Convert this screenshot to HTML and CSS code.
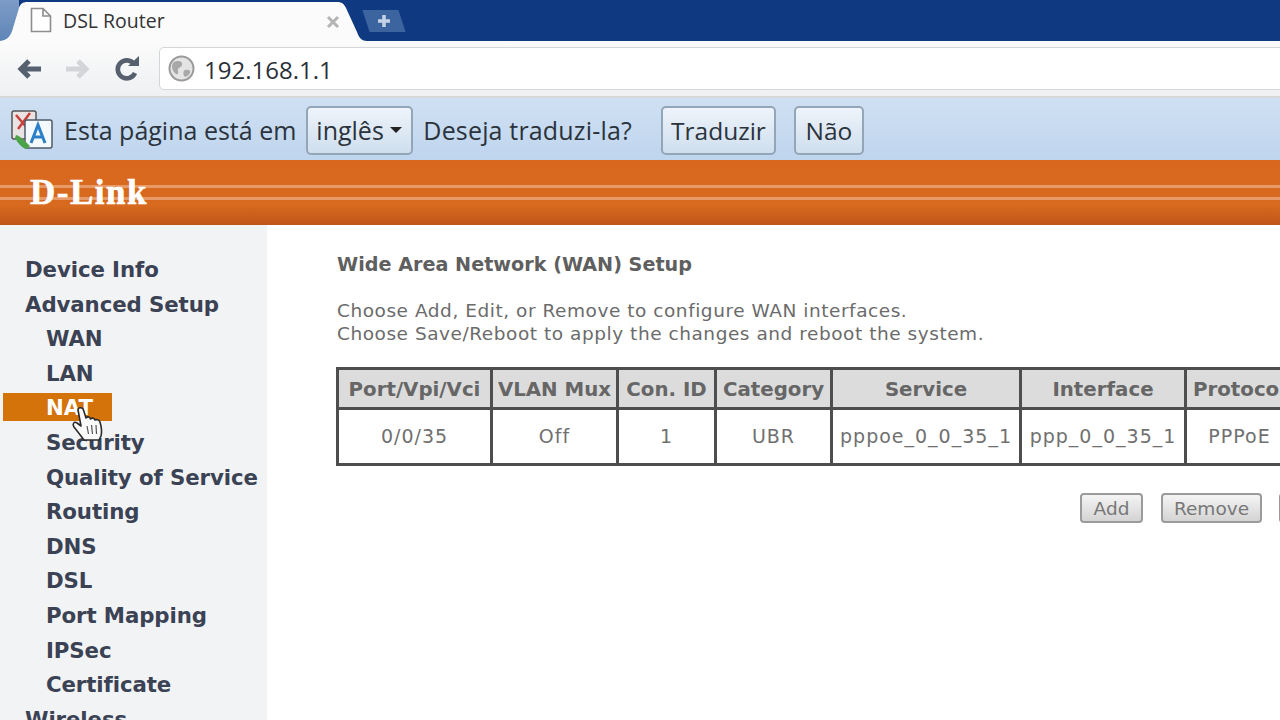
FILE: index.html
```html
<!DOCTYPE html>
<html lang="pt">
<head>
<meta charset="utf-8">
<title>DSL Router</title>
<link rel="stylesheet" href="styles.css">
</head>
<body>
<div class="tabstrip">
  <div class="tab">
    <svg class="tab-shape" width="372" height="41" viewBox="0 0 372 41"><path d="M0 41 C8 41 12 36 14 28 L20 8 C21 4 24 2 28 2 L338 2 C343 2 345 4 347 8 L358 32 C360 38 363 41 368 41 Z" fill="#fbfbfb"/></svg>
    <svg class="tab-icon" width="24" height="28" viewBox="0 0 24 28"><path d="M2.5 2.5 H14 L21.5 10 V25.5 H2.5 Z M14 2.5 V10 H21.5" fill="#fff" stroke="#8d8d8d" stroke-width="1.6"/></svg>
    <span class="tab-title">DSL Router</span>
    <svg class="tab-close" width="14" height="14" viewBox="0 0 14 14"><path d="M2 2 L12 12 M12 2 L2 12" stroke="#b4b4b4" stroke-width="3"/></svg>
  </div>
  <div class="newtab">
    <svg width="16" height="16" viewBox="0 0 16 16"><path d="M8 2 V14 M2 8 H14" stroke="#c4d3e6" stroke-width="3.5"/></svg>
  </div>
</div>
<div class="toolbar">
  <svg class="nav" width="28" height="24" viewBox="0 0 28 24"><path d="M26 12 H7 M14 4 L6 12 L14 20" fill="none" stroke="#56606e" stroke-width="5"/></svg>
  <svg class="nav" width="28" height="24" viewBox="0 0 28 24"><path d="M2 12 H21 M14 4 L22 12 L14 20" fill="none" stroke="#d3d5d8" stroke-width="5"/></svg>
  <svg class="nav" width="28" height="26" viewBox="0 0 28 26"><path d="M21 8 A9 9 0 1 0 22 17" fill="none" stroke="#56606e" stroke-width="4.6"/><path d="M15 10 H26 V0 Z" fill="#56606e"/></svg>
  <div class="omnibox">
    <svg class="globe" width="27" height="27" viewBox="0 0 27 27"><circle cx="13.5" cy="13.5" r="12" fill="#e4e4e4" stroke="#9a9a9a" stroke-width="2"/><path d="M6 7 C10 5 15 6 14 10 C13 13 9 12 10 16 C11 20 8 20 6 17 C3 13 4 9 6 7 Z M17 15 C20 14 23 15 22 18 C20 21 17 23 16 21 C15 19 15 16 17 15 Z" fill="#a8a8a8"/></svg>
    <span class="url">192.168.1.1</span>
  </div>
</div>
<div class="infobar">
  <svg class="translate" width="44" height="42" viewBox="0 0 44 42">
    <rect x="2" y="2" width="24" height="28" rx="2" fill="#e9e3e3" stroke="#555" stroke-width="1.5"/>
    <path d="M6 6 L18 20 M20 4 L8 20" stroke="#c9403a" stroke-width="2.5"/>
    <rect x="15" y="11" width="27" height="28" rx="2" fill="#f4f9fd" stroke="#4d5b69" stroke-width="1.5"/>
    <path d="M21 34 L28 16 L35 34 M24 28 H32" fill="none" stroke="#2b7fc9" stroke-width="3"/>
    <path d="M6 26 C10 27 16 33 20 37 L16 40 C12 39 7 33 5 29 Z" fill="#4ca246"/>
  </svg>
  <span class="info-text">Esta página está em</span>
  <div class="btn lang">inglês<span class="caret"></span></div>
  <span class="info-text ask">Deseja traduzi-la?</span>
  <div class="btn translate-btn">Traduzir</div>
  <div class="btn no-btn">Não</div>
</div>
<header class="brand">
  <span class="logo">D-Link</span>
</header>
<div class="page">
  <nav class="sidebar">
    <a class="item">Device Info</a>
    <a class="item">Advanced Setup</a>
    <a class="item sub">WAN</a>
    <a class="item sub">LAN</a>
    <a class="item sub active">NAT</a>
    <a class="item sub">Security</a>
    <a class="item sub">Quality of Service</a>
    <a class="item sub">Routing</a>
    <a class="item sub">DNS</a>
    <a class="item sub">DSL</a>
    <a class="item sub">Port Mapping</a>
    <a class="item sub">IPSec</a>
    <a class="item sub">Certificate</a>
    <a class="item">Wireless</a>
    <svg class="cursor" width="36" height="38" viewBox="0 0 36 38"><path d="M8 5 C8 2 13 2 13.5 5 L16 13 C18 11 20 12 20.5 14 C22 12.5 24.5 13 25 15 C27 14 29.5 15 30 17 C31.5 22 32 27 31 31 L29 35 H14 C11 31 8 27 4 22 C2 19 4 16 7 18 L11 21 Z" fill="#fafafa" stroke="#2a2a2a" stroke-width="1.6" stroke-linejoin="round"/><path d="M17 21 L18.5 29 M21.5 20 L22.5 29 M26 20 L26.5 29" stroke="#555" stroke-width="1.2"/></svg>
  </nav>
  <main class="content">
    <h1 class="title">Wide Area Network (WAN) Setup</h1>
    <p class="desc">Choose Add, Edit, or Remove to configure WAN interfaces.<br>Choose Save/Reboot to apply the changes and reboot the system.</p>
    <table class="wan">
      <colgroup>
        <col class="c1"><col class="c2"><col class="c3"><col class="c4"><col class="c5"><col class="c6"><col class="c7">
      </colgroup>
      <thead>
        <tr><th>Port/Vpi/Vci</th><th>VLAN Mux</th><th>Con. ID</th><th>Category</th><th>Service</th><th>Interface</th><th>Protocol</th></tr>
      </thead>
      <tbody>
        <tr><td>0/0/35</td><td>Off</td><td>1</td><td>UBR</td><td>pppoe_0_0_35_1</td><td>ppp_0_0_35_1</td><td>PPPoE</td></tr>
      </tbody>
    </table>
    <div class="actions">
      <div class="action add">Add</div>
      <div class="action remove">Remove</div>
      <div class="action more"></div>
    </div>
  </main>
</div>
</body>
</html>
```
FILE: styles.css
```css
* { box-sizing: border-box; }
html, body { margin: 0; padding: 0; width: 1280px; height: 720px; overflow: hidden; background: #fff; }
body { display: flex; flex-direction: column; font-family: "Open Sans", "Liberation Sans", sans-serif; }

.tabstrip { height: 41px; flex: none; display: flex; align-items: flex-start; background: #0f3a82; }
.tab { position: relative; width: 358px; height: 41px; flex: none; margin-left: -1px; background: linear-gradient(#7d9cc6, #5f86b8) 0 0 / 20px 41px no-repeat; }
.tab-shape { position: absolute; left: 0; top: 0; }
.tab-icon { position: absolute; left: 30px; top: 6px; }
.tab-title { position: absolute; left: 64px; top: 8px; font-size: 19.5px; line-height: 25px; color: #333; }
.tab-close { position: absolute; left: 327px; top: 15px; }
.newtab { width: 36px; height: 22px; margin: 10px 0 0 9px; background: #3c659f; display: flex; align-items: center; justify-content: center; transform: skewX(18deg); }
.newtab svg { transform: skewX(-18deg); }

.toolbar { height: 57px; flex: none; display: flex; align-items: center; padding: 0 0 0 15px; background: linear-gradient(#fbfbfb, #eef0f2); border-bottom: 2px solid #d6d8da; }
.nav { flex: none; margin-right: 21px; }
.nav:nth-child(3) { margin-right: 18px; }
.omnibox { flex: 1; height: 43px; margin-right: -8px; display: flex; align-items: center; background: #fff; border: 1px solid #d4d6d9; border-radius: 5px; padding-left: 8px; }
.url { margin-left: 9px; padding-top: 3px; font-size: 24px; line-height: 30px; color: #2b3038; }

.infobar { height: 62px; flex: none; display: flex; align-items: center; padding: 2px 0 0 10px; background: linear-gradient(#cfe0f2, #bfd5ee); }
.translate { flex: none; margin-right: 10px; }
.info-text { font-size: 25px; color: #2b333c; white-space: nowrap; }
.ask { margin-left: 10px; letter-spacing: 0.17px; }
.btn { height: 49px; display: flex; align-items: center; font-size: 25px; color: #2b333c; background: linear-gradient(#eef4fa, #cfdeee); border: 2px solid #93a6b8; border-radius: 5px; white-space: nowrap; }
.lang { margin-left: 10px; padding: 0 8px; width: 107px; }
.caret { width: 0; height: 0; margin-left: 6px; border: 6px solid transparent; border-top-color: #222; border-bottom-width: 0; }
.translate-btn { margin-left: 29px; width: 115px; justify-content: center; font-size: 24.5px; }
.no-btn { margin-left: 18px; width: 70px; justify-content: center; font-size: 24.5px; }

.brand { height: 65px; flex: none; position: relative; display: flex; align-items: center; padding-left: 30px; background:
  linear-gradient(#e79a68, #e79a68) 0 25px / 100% 3px no-repeat,
  linear-gradient(#e79a68, #e79a68) 0 37px / 100% 3px no-repeat,
  linear-gradient(#d9681e 0%, #d76a1f 70%, #bf5519 100%); }
.logo { font-family: "Liberation Serif", serif; font-weight: 700; font-size: 35px; line-height: 36px; color: #fff; letter-spacing: 1.5px; -webkit-text-stroke: 0.6px #fff; }

.page { flex: 1; display: flex; min-height: 0; }
.sidebar { position: relative; width: 267px; flex: none; background: #f2f3f5; padding-top: 27px; display: flex; flex-direction: column; overflow: hidden; }
.item { display: block; height: 34.6px; line-height: 36.6px; padding-left: 25px; font-family: "DejaVu Sans", sans-serif; font-weight: 700; font-size: 21.3px; letter-spacing: -0.1px; color: #3a4254; white-space: nowrap; flex: none; }
.sub { padding-left: 46px; }
.active { width: 109px; height: 28px; line-height: 30px; margin: 3px 0 3.6px 3px; padding-left: 43px; background: #d4730a; color: #fff; }
.cursor { position: absolute; left: 70px; top: 180px; }

.content { flex: 1; min-width: 0; padding: 28px 0 0 70px; overflow: hidden; }
.title { margin: 0; font-family: "DejaVu Sans", sans-serif; font-weight: 700; font-size: 19.2px; line-height: 24px; color: #5f5f5f; white-space: nowrap; }
.desc { margin: 22px 0 0; font-family: "DejaVu Sans", sans-serif; font-size: 18.5px; letter-spacing: 0.54px; line-height: 23px; color: #6b6b6b; white-space: nowrap; }
.wan { margin: 22px 0 0 -1px; border-collapse: collapse; table-layout: fixed; width: 956px; border: 3px solid #4e4e4e; font-family: "DejaVu Sans", sans-serif; }
.wan th, .wan td { border: 3px solid #4e4e4e; text-align: center; white-space: nowrap; padding: 0; }
.wan th { height: 40px; padding-top: 2px; background: #dcdcdc; font-size: 19.8px; color: #666; }
.wan td { height: 56px; padding-bottom: 2px; background: #fff; font-size: 19px; letter-spacing: 1px; color: #707070; }
.c1 { width: 154px; } .c2 { width: 126px; } .c3 { width: 98px; } .c4 { width: 116px; } .c5 { width: 189px; } .c6 { width: 165px; } .c7 { width: 108px; }
.actions { display: flex; margin: 27px 0 0 743px; width: 400px; }
.action { height: 30px; display: flex; align-items: center; justify-content: center; font-family: "DejaVu Sans", sans-serif; font-size: 18.5px; color: #777; background: linear-gradient(#f4f4f4, #d4d4d4); border: 2px solid #9b9b9b; border-radius: 4px; }
.add { width: 63px; }
.remove { width: 101px; margin-left: 18px; }
.more { width: 40px; margin-left: 17px; }
```
